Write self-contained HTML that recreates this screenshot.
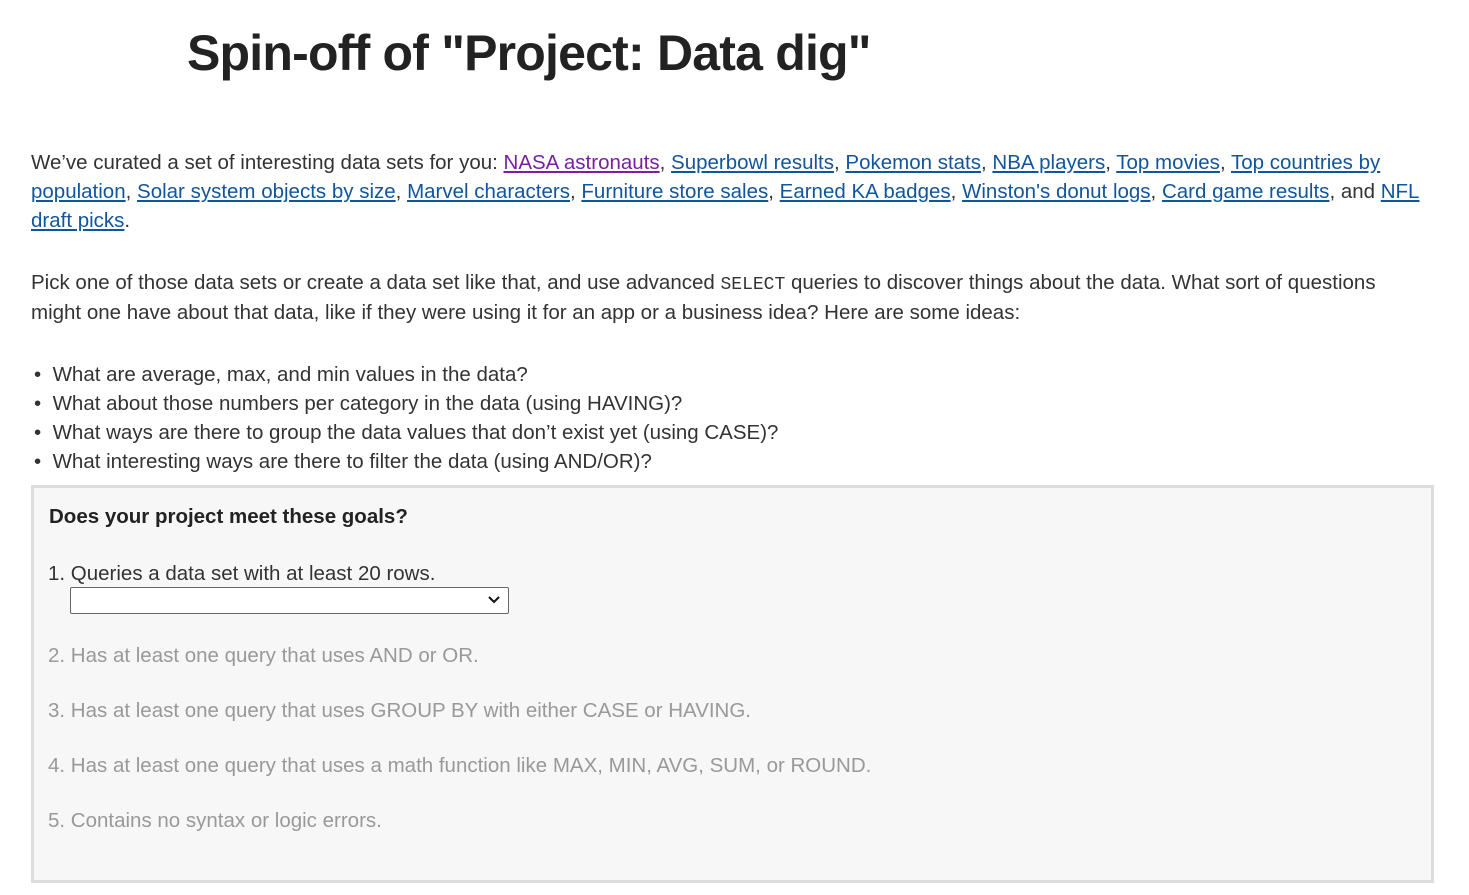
<!DOCTYPE html>
<html><head><meta charset="utf-8"><style>
body{margin:0;background:#fff;font-family:"Liberation Sans",sans-serif;color:#333;width:1469px;height:895px;overflow:hidden;position:relative}
.a{position:absolute;white-space:nowrap;font-size:20.5px;line-height:29px}
h1{position:absolute;left:187px;top:24px;margin:0;font-size:50px;font-weight:bold;color:#222;letter-spacing:-0.8px;white-space:nowrap}
a{color:#11559c;text-decoration:underline}
a.v{color:#7a1fa2}
code{font-family:"Liberation Mono",monospace;font-size:18px}
.box{position:absolute;left:31px;top:485px;width:1397px;height:392px;border:3px solid #ddd;background:#f7f7f7}
.g{color:#999}
.sel{position:absolute;left:70px;top:587px;width:437px;height:25px;border:1px solid #666;background:#fff;border-radius:2px}
</style></head><body>
<h1>Spin-off of "Project: Data dig"</h1>
<div class="a" style="left:31px;top:148px">We’ve curated a set of interesting data sets for you: <a class="v">NASA astronauts</a>, <a>Superbowl results</a>, <a>Pokemon stats</a>, <a>NBA players</a>, <a>Top movies</a>, <a>Top countries by</a></div>
<div class="a" style="left:31px;top:177px"><a>population</a>, <a>Solar system objects by size</a>, <a>Marvel characters</a>, <a>Furniture store sales</a>, <a>Earned KA badges</a>, <a>Winston's donut logs</a>, <a>Card game results</a>, and <a>NFL</a></div>
<div class="a" style="left:31px;top:206px"><a>draft picks</a>.</div>
<div class="a" style="left:31px;top:268px">Pick one of those data sets or create a data set like that, and use advanced <code>SELECT</code> queries to discover things about the data. What sort of questions</div>
<div class="a" style="left:31px;top:298px">might one have about that data, like if they were using it for an app or a business idea? Here are some ideas:</div>
<div class="a" style="left:34px;top:360px">•&nbsp;&nbsp;What are average, max, and min values in the data?</div>
<div class="a" style="left:34px;top:389px">•&nbsp;&nbsp;What about those numbers per category in the data (using HAVING)?</div>
<div class="a" style="left:34px;top:418px">•&nbsp;&nbsp;What ways are there to group the data values that don’t exist yet (using CASE)?</div>
<div class="a" style="left:34px;top:447px">•&nbsp;&nbsp;What interesting ways are there to filter the data (using AND/OR)?</div>
<div class="box"></div>
<div class="a" style="left:49px;top:502px;font-weight:bold;color:#222">Does your project meet these goals?</div>
<div class="a" style="left:48px;top:559px">1. Queries a data set with at least 20 rows.</div>
<div class="sel"><svg style="position:absolute;right:8px;top:7px" width="12" height="10" viewBox="0 0 12 10"><path d="M1 2l5 5 5-5" fill="none" stroke="#111" stroke-width="2"/></svg></div>
<div class="a g" style="left:48px;top:641px">2. Has at least one query that uses AND or OR.</div>
<div class="a g" style="left:48px;top:696px">3. Has at least one query that uses GROUP BY with either CASE or HAVING.</div>
<div class="a g" style="left:48px;top:751px">4. Has at least one query that uses a math function like MAX, MIN, AVG, SUM, or ROUND.</div>
<div class="a g" style="left:48px;top:806px">5. Contains no syntax or logic errors.</div>
</body></html>
